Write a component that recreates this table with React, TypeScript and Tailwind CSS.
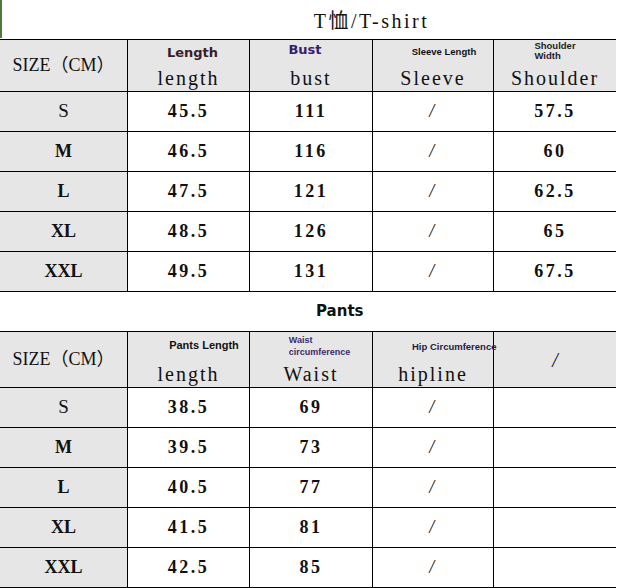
const serif = "font-['Liberation_Serif','Noto_Sans_CJK_SC',serif]";
const sans = "font-['Liberation_Sans',Arial,sans-serif]";
const tahoma = "font-['DejaVu_Sans',Verdana,sans-serif]";

const GRID = "grid grid-cols-[127px_122px_123px_121px_123px] w-[616px]";

type Row = { size: string; bold: boolean; cells: string[] };

const shirtRows: Row[] = [
  { size: "S", bold: false, cells: ["45.5", "111", "/", "57.5"] },
  { size: "M", bold: true, cells: ["46.5", "116", "/", "60"] },
  { size: "L", bold: true, cells: ["47.5", "121", "/", "62.5"] },
  { size: "XL", bold: true, cells: ["48.5", "126", "/", "65"] },
  { size: "XXL", bold: true, cells: ["49.5", "131", "/", "67.5"] },
];

const pantsRows: Row[] = [
  { size: "S", bold: false, cells: ["38.5", "69", "/", ""] },
  { size: "M", bold: true, cells: ["39.5", "73", "/", ""] },
  { size: "L", bold: true, cells: ["40.5", "77", "/", ""] },
  { size: "XL", bold: true, cells: ["41.5", "81", "/", ""] },
  { size: "XXL", bold: true, cells: ["42.5", "85", "/", ""] },
];

function BodyRows({ rows }: { rows: Row[] }) {
  return (
    <>
      {rows.map((r) => (
        <div key={r.size} className={`${GRID} h-[40px] border-b border-black`}>
          <div
            className={`flex items-center justify-center bg-[#e6e6e6] ${
              r.bold ? "text-[18px] font-bold" : "text-[19px]"
            }`}
          >
            {r.size}
          </div>
          {r.cells.map((c, i) => (
            <div
              key={i}
              className={`flex items-center justify-center border-l border-black bg-white text-[18px] tracking-[2.5px] ${
                c === "/" ? "italic" : "font-bold"
              }`}
            >
              {c}
            </div>
          ))}
        </div>
      ))}
    </>
  );
}

// header cell: small english label on top, big word underneath
function HeadCell({ label, word, top }: { label: React.ReactNode; word: string; top: string }) {
  return (
    <div className="flex flex-col border-l border-black bg-[#e6e6e6]">
      <div className={`flex justify-center ${top}`}>{label}</div>
      <div className="flex h-[22px] items-center justify-center text-[20px] leading-[22px] tracking-[2px]">{word}</div>
    </div>
  );
}

export default function App() {
  return (
    <div className={`relative h-[588px] w-[618px] overflow-hidden bg-white text-[#111] ${serif}`}>
      {/* title band */}
      <div className="flex h-[40px] w-[616px] border-b border-black">
        <div className="w-[127px]">
          <div className="h-[38px] w-[2px] bg-[#4e7a3a]" />
        </div>
        <div className="flex flex-1 items-center justify-center pt-[2px] text-[20px] tracking-[2.5px]">T恤/T-shirt</div>
      </div>

      {/* T-shirt header */}
      <div className={`${GRID} h-[52px] border-b border-black`}>
        <div className="flex items-center justify-center bg-[#e6e6e6] text-[18px]">SIZE（CM）</div>
        <HeadCell
          top="h-[27px] pt-[5px]"
          label={<span className={`${tahoma} ml-[8px] text-[13px] leading-[15px] font-bold text-[#3b1d2a]`}>Length</span>}
          word="length"
        />
        <HeadCell
          top="h-[27px] pt-[2px]"
          label={<span className={`${tahoma} mr-[12px] text-[13px] leading-[15px] font-bold text-[#36206e]`}>Bust</span>}
          word="bust"
        />
        <HeadCell
          top="h-[27px] pt-[6px]"
          label={<span className={`${sans} ml-[22px] text-[9.5px] leading-[12px] font-bold`}>Sleeve Length</span>}
          word="Sleeve"
        />
        <HeadCell
          top="h-[27px] pt-[1px]"
          label={
            <span className={`${sans} block text-left text-[9.5px] leading-[10px] font-bold text-[#222]`}>
              Shoulder
              <br />
              Width
            </span>
          }
          word="Shoulder"
        />
      </div>
      <BodyRows rows={shirtRows} />

      {/* pants title band */}
      <div className="flex h-[40px] w-[616px] items-center border-b border-black pl-[316px]">
        <span className={`${tahoma} text-[15px] font-bold`}>Pants</span>
      </div>

      {/* pants header */}
      <div className={`${GRID} h-[56px] border-b border-black`}>
        <div className="flex items-center justify-center bg-[#e6e6e6] text-[18px]">SIZE（CM）</div>
        <HeadCell
          top="h-[31px] pt-[7px]"
          label={<span className={`${sans} ml-[31px] text-[11px] leading-[13px] font-bold`}>Pants Length</span>}
          word="length"
        />
        <HeadCell
          top="h-[31px] pt-[3px]"
          label={
            <span className={`${sans} ml-[17px] block text-left text-[9px] leading-[11.5px] font-bold text-[#3b2a6e]`}>
              Waist
              <br />
              circumference
            </span>
          }
          word="Waist"
        />
        <div className="relative flex flex-col border-l border-black bg-[#e6e6e6]">
          <div className="relative z-10 h-[31px] pt-[7px] pl-[39px] leading-[12px]">
            <span className={`${sans} text-[9.5px] leading-[12px] font-bold whitespace-nowrap text-[#2a1a40]`}>
              Hip Circumference
            </span>
          </div>
          <div className="flex h-[22px] items-center justify-center text-[20px] leading-[22px] tracking-[2px]">hipline</div>
        </div>
        <div className="flex items-center justify-center border-l border-black bg-[#e6e6e6] text-[20px] italic">/</div>
      </div>
      <BodyRows rows={pantsRows} />
    </div>
  );
}
